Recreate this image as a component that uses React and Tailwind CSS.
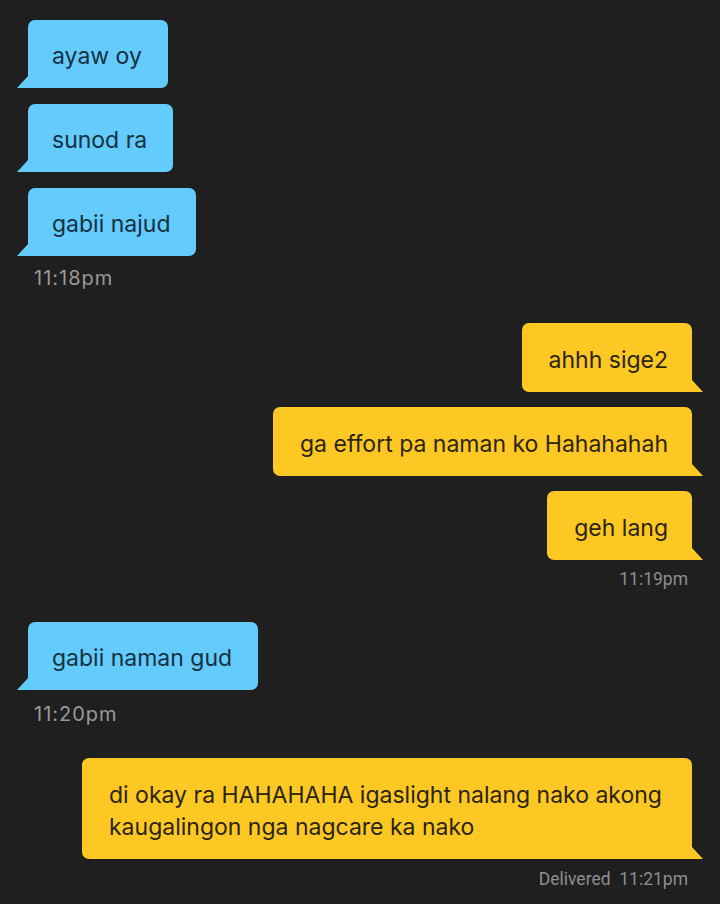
import React from "react";

const font = { fontFamily: 'Inter, "Noto Sans", sans-serif' };

function Left({ children, className = "" }) {
  return (
    <div className={"relative self-start " + className}>
      <span className="absolute left-[-11px] bottom-0 w-[11px] h-[12px] bg-[#64cbfd] [clip-path:polygon(100%_0,100%_100%,0_100%)]" />
      <div className="bg-[#64cbfd] text-[#15303f] rounded-[7px] rounded-bl-none pl-[24px] pr-[26px] pt-[20px] pb-[16px] text-[23px] leading-[32px]">
        {children}
      </div>
    </div>
  );
}

function Right({ children, className = "" }) {
  return (
    <div className={"relative self-end " + className}>
      <span className="absolute right-[-11px] bottom-0 w-[11px] h-[12px] bg-[#fec824] [clip-path:polygon(0_0,100%_100%,0_100%)]" />
      <div className="bg-[#fec824] text-[#2a2412] rounded-[7px] rounded-br-none pl-[27px] pr-[24px] pt-[20.5px] pb-[16.5px] text-[23px] leading-[32px]">
        {children}
      </div>
    </div>
  );
}

export default function App() {
  return (
    <div
      className="w-[720px] h-[904px] bg-[#1f1f1f] flex flex-col px-[28px] pt-[20px] overflow-hidden"
      style={font}
    >
      <Left>ayaw oy</Left>
      <Left className="mt-[16px]">sunod ra</Left>
      <Left className="mt-[16px]">gabii najud</Left>
      <div className="self-start ml-[6px] mt-[10px] text-[20px] tracking-[1px] leading-[24px] text-[#999999]">11:18pm</div>

      <Right className="mt-[33px]">ahhh sige2</Right>
      <Right className="mt-[15px]">ga effort pa naman ko Hahahahah</Right>
      <Right className="mt-[15px]">geh lang</Right>
      <div className="self-end mr-[4px] mt-[7px] text-[17.5px] leading-[24px] text-[#8e8e8e] [font-family:Roboto,sans-serif]">11:19pm</div>

      <Left className="mt-[31px]">gabii naman gud</Left>
      <div className="self-start ml-[6px] mt-[12px] text-[20px] tracking-[1px] leading-[24px] text-[#999999]">11:20pm</div>

      <Right className="mt-[32px] w-[610px]">
        di okay ra HAHAHAHA igaslight nalang nako akong kaugalingon nga nagcare ka nako
      </Right>
      <div className="self-end mr-[4px] mt-[8px] text-[17.5px] leading-[24px] text-[#8e8e8e] [font-family:Roboto,sans-serif]">
        Delivered&nbsp; 11:21pm
      </div>
    </div>
  );
}
